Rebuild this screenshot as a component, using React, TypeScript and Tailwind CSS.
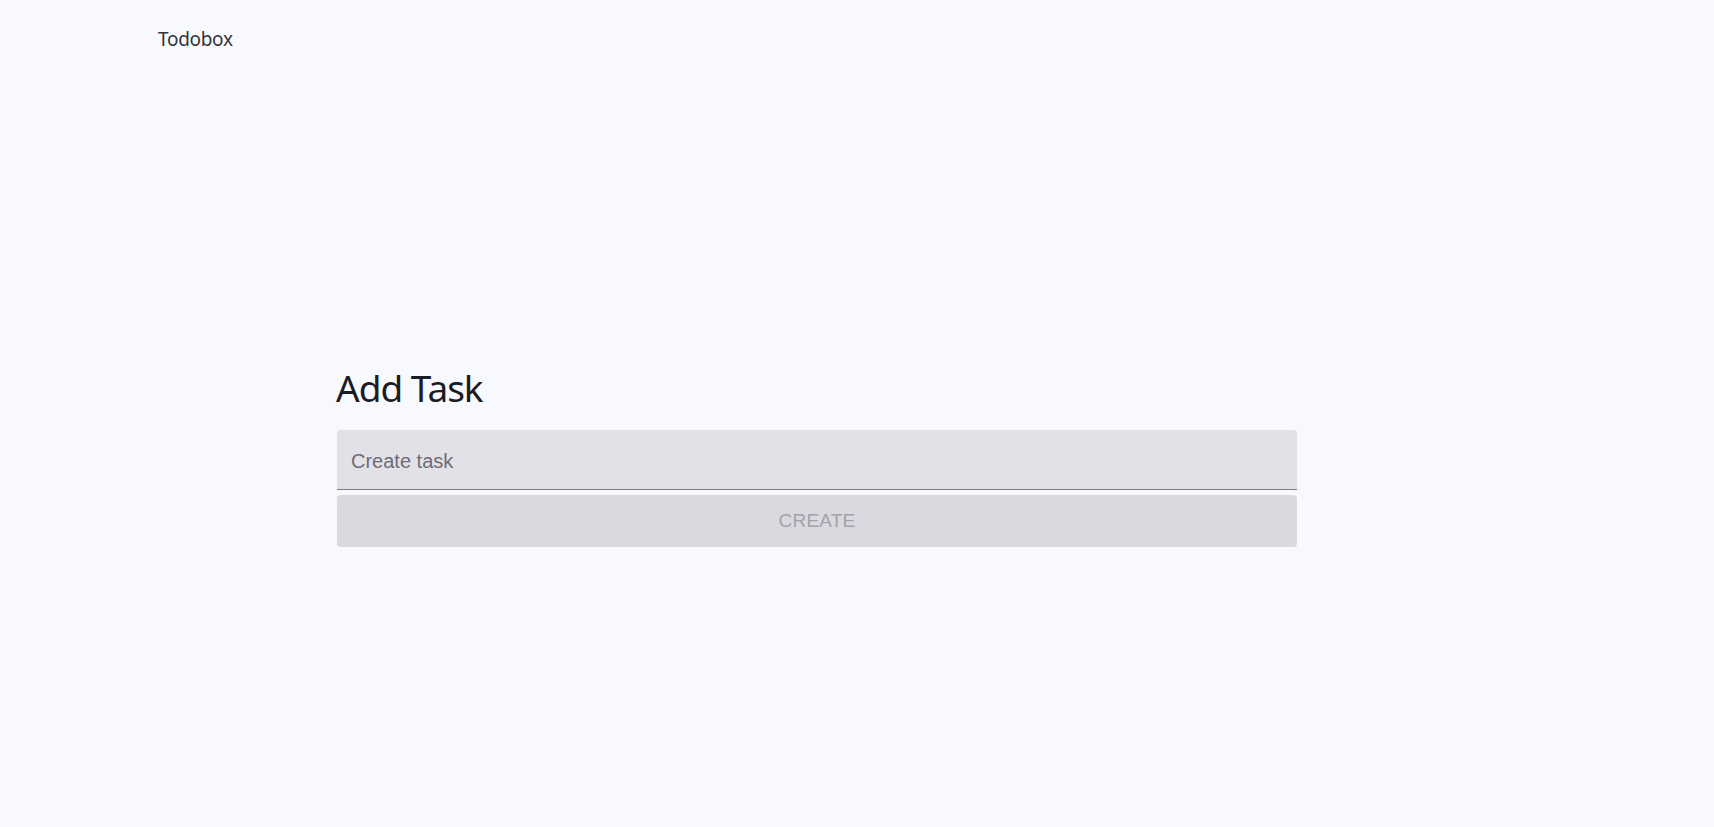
import React from "react";

export default function App() {
  return (
    <div className="min-h-[827px] w-full bg-[#f8f9fe]">
      <header className="pl-[158px] pt-[25px]">
        <div className="font-['Noto_Sans',sans-serif] text-[19px] leading-[28px] text-[#34343a] tracking-[-0.3px]">
          Todobox
        </div>
      </header>
      <main className="ml-[337px] w-[960px] pt-[313px]">
        <h1 className="-ml-[1px] font-['Noto_Sans',sans-serif] text-[37px] leading-[44px] tracking-[-1px] text-[#1b1b24]">
          Add Task
        </h1>
        <div className="mt-[20px] flex flex-col gap-[5px]">
          <div className="flex h-[60px] items-center rounded-t-[4px] border-b border-[#7e7d85] bg-[#e2e1e7]">
            <input
              placeholder="Create task"
              className="h-full w-full bg-transparent pl-[14px] pt-[4px] font-['Liberation_Sans',Arial,sans-serif] text-[20px] text-[#222] outline-none placeholder:text-[#6d6c76]"
            />
          </div>
          <button
            disabled
            className="flex h-[52px] w-full items-center justify-center rounded-[4px] bg-[#dad9df] font-['Liberation_Sans',Arial,sans-serif] text-[19px] tracking-[0.2px] text-[#a3a2aa]"
          >
            CREATE
          </button>
        </div>
      </main>
    </div>
  );
}
